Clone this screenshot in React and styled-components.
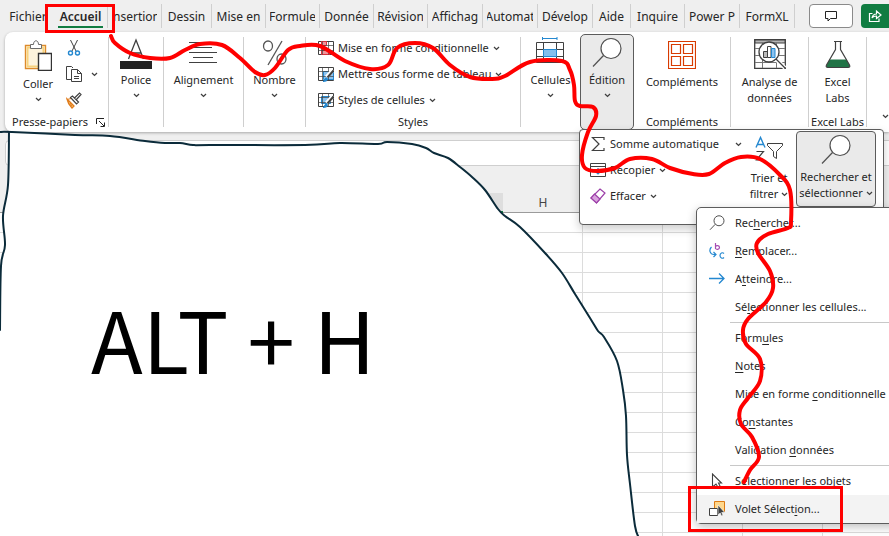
import React from "react"
import styled, { createGlobalStyle, css } from "styled-components"

const color = {
  chrome: "#efefef",
  text: "#262626",
  line: "#cfcfcf",
  outline: "#5c5c5c",
  pressed: "#eaeaea",
  green: "#107c41",
  blue: "#2488d0",
  red: "#ff0000",
  ink: "#0b2b3a",
}

const GlobalStyle = createGlobalStyle`
  * {
    box-sizing: border-box;
  }

  body {
    margin: 0;
    overflow: hidden;
    color: ${color.text};
    background: #fff;
    font-family: "Noto Sans", "Open Sans", sans-serif;
    font-size: 11px;
    line-height: 16px;
  }

  button {
    margin: 0;
    padding: 0;
    border: 0;
    color: inherit;
    background: none;
    font: inherit;
  }

  svg {
    display: block;
    flex: none;
  }
`

const Window = styled.div`
  position: relative;
  display: flex;
  flex-direction: column;
  height: 100vh;
  overflow: hidden;
  background: ${color.chrome};
`

/* Tabs */

const TabBar = styled.header`
  display: flex;
  flex: none;
  align-items: center;
  justify-content: space-between;
  height: 32px;
`

const Tabs = styled.nav`
  display: flex;
`

const Tab = styled.button`
  display: flex;
  width: ${p => p.$width}px;
  height: 24px;
  padding: 0 4px;
  border-right: 1px solid ${color.line};
  font-size: 12px;
  line-height: 26px;

  ${p =>
    p.$first &&
    css`
      padding: 0 6px 0 8px;
      border-right: 0;
    `}

  ${p =>
    p.$active &&
    css`
      font-weight: 600;
    `}
`

const TabText = styled.span`
  display: flex;
  flex: 1;
  justify-content: center;
  height: 24px;
  overflow: hidden;
  white-space: nowrap;
  border-bottom: ${p => (p.$active ? `2px solid ${color.green}` : 0)};
`

const TabActions = styled.div`
  display: flex;
  gap: 8px;
`

const ActionButton = styled.button`
  display: flex;
  align-items: center;
  justify-content: center;
  width: 44px;
  height: 24px;
  border: 1px solid #8a8a8a;
  border-radius: 4px;
  background: #fff;
`

const ShareButton = styled(ActionButton)`
  justify-content: flex-start;
  width: 28px;
  padding-left: 7px;
  border: 0;
  border-radius: 4px 0 0 4px;
  background: ${color.green};
`

/* Ribbon */

const RibbonBar = styled.section`
  display: flex;
  flex: none;
  height: 100px;
  margin-left: 5px;
  padding: 5px 0;
  border-radius: 8px 0 0 8px;
  background: #fff;
  box-shadow: 0 1px 3px rgba(0, 0, 0, 0.3);
`

const Group = styled.div`
  display: flex;
  flex: none;
  flex-direction: column;
  align-items: center;
  justify-content: space-between;
  width: ${p => p.$width}px;
  border-right: ${p => (p.$open ? 0 : `1px solid ${color.line}`)};
`

const GroupLabel = styled.div`
  display: flex;
  align-items: center;
  gap: 8px;
  line-height: 10px;
  white-space: nowrap;
`

const BigButton = styled.button`
  display: flex;
  flex-direction: column;
  align-items: center;
  white-space: nowrap;
  text-align: center;

  > svg:first-child {
    margin-bottom: ${p => (p.$lines ? 5 : 3)}px;
  }
`

const ButtonCaret = styled.span`
  padding-top: 5px;
`

const ClipboardGroup = styled(Group)`
  padding-left: 4px;
`

const ClipboardTools = styled.div`
  display: grid;
  grid-template-columns: 46px 44px;
  align-items: start;
  align-self: flex-start;
  padding-left: 6px;
`

const SmallTools = styled.div`
  display: flex;
  flex-direction: column;
  gap: 8px;
  padding: 2px 0 0 4px;
`

const SmallButton = styled.button`
  display: flex;
  align-items: center;
  gap: 8px;
  height: 18px;
`

const RowList = styled.div`
  display: flex;
  flex-direction: column;
  align-items: flex-start;
  gap: 8px;
  width: ${p => p.$width}px;
`

const RowButton = styled.button`
  display: flex;
  align-items: center;
  gap: 4px;
  width: ${p => (p.$wide ? "100%" : "auto")};
  height: 18px;
  white-space: nowrap;

  > svg:last-child {
    margin-left: ${p => (p.$wide ? "auto" : 0)};
  }
`

const StylesBody = styled.div`
  align-self: flex-start;
  padding: 2px 0 0 12px;
`

const OpenGroup = styled.div`
  position: relative;
  flex: none;
  width: 54px;
  margin: -3px 0;
`

const PressedButton = styled(BigButton)`
  width: 100%;
  height: 96px;
  padding-top: 2px;
  border: 1px solid ${color.outline};
  border-radius: 5px;
  background: ${color.pressed};
`

const RibbonEnd = styled.div`
  display: flex;
  flex: 1;
  align-items: flex-end;
  justify-content: flex-end;
  padding-bottom: 8px;
`

/* Flyout under the pressed ribbon button */

const Flyout = styled.div`
  position: absolute;
  z-index: 2;
  top: 95px;
  left: -1px;
  display: flex;
  width: 305px;
  height: 96px;
  padding: 1px 7px 0 10px;
  border: 1px solid ${color.outline};
  border-radius: 4px;
  background: #fff;
  box-shadow: 0 4px 10px rgba(0, 0, 0, 0.2);
`

const FlyoutRows = styled(RowList)`
  flex: none;
  padding-top: 4px;
`

const FlyoutButton = styled(BigButton)`
  flex: 1;
  height: 76px;
  padding-top: 4px;

  > svg:first-child {
    margin-bottom: 3px;
  }
`

const FlyoutPressed = styled(FlyoutButton)`
  flex: none;
  width: 80px;
  padding-top: 2px;
  border: 1px solid ${color.outline};
  border-radius: 4px;
  background: ${color.pressed};
`

const CaretLine = styled.span`
  display: flex;
  align-items: center;
  justify-content: center;
  gap: 3px;
`

const Menu = styled.div`
  position: absolute;
  z-index: 3;
  top: 77px;
  left: 116px;
  width: 230px;
  padding: 1px 0 0;
  border: 1px solid ${color.outline};
  border-radius: 5px;
  background: #fff;
  box-shadow: 0 3px 10px rgba(0, 0, 0, 0.25);
`

const MenuItem = styled.button`
  display: grid;
  grid-template-columns: 26px 1fr;
  align-items: center;
  width: 100%;
  height: 28px;
  padding-left: 12px;
  background: ${p => (p.$hover ? "#f3f3f3" : "none")};
  text-align: left;
  white-space: nowrap;

  u {
    text-underline-offset: 2px;
  }
`

const MenuRule = styled.hr`
  height: 1px;
  margin: 1px 0 1px 33px;
  border: 0;
  background: #c8c8c8;
`

/* Worksheet */

const FormulaBar = styled.div`
  flex: none;
  height: 26px;
  margin: 8px 0 0 5px;
  border: 1px solid ${color.line};
  border-right: 0;
  border-radius: 5px 0 0 5px;
  background: #fff;
`

const Sheet = styled.table`
  flex: none;
  width: 983px;
  margin-top: 27px;
  border-collapse: separate;
  border-spacing: 0;
  table-layout: fixed;
`

const ColumnHead = styled.th`
  width: ${p => (p.$corner ? 23 : 80)}px;
  height: 20px;
  padding: 0;
  border-bottom: ${p => (p.$selected ? `2px solid ${color.green}` : "1px solid #9b9b9b")};
  color: #444;
  background: ${p => (p.$selected ? "#dedede" : color.chrome)};
  font-size: 12px;
  font-weight: 400;
  line-height: 18px;
`

const Cell = styled.td`
  height: 20px;
  padding: 0;
  border-right: 1px solid #dcdcdc;
  border-bottom: 1px solid #dcdcdc;
  background: #fff;
`

/* Drawing layer */

const Drawing = styled.svg`
  position: absolute;
  z-index: ${p => p.$layer};
  inset: 0;
  width: 100%;
  height: 100%;
  fill: none;
  stroke-linecap: round;
  stroke-linejoin: round;
  pointer-events: none;
`

const Note = styled.p`
  position: absolute;
  z-index: 1;
  top: 275px;
  left: 91px;
  margin: 0;
  color: #000;
  font-family: "Noto Sans CJK JP", "Noto Sans", sans-serif;
  font-size: 85px;
  line-height: 124px;
  white-space: nowrap;
`

/* Icons */

const Icon = ({ w = 18, h = 18, children, ...rest }) => (
  <svg
    width={w}
    height={h}
    viewBox={`0 0 ${w} ${h}`}
    fill="none"
    stroke="#404040"
    aria-hidden="true"
    {...rest}
  >
    {children}
  </svg>
)

const Caret = () => (
  <Icon w={7} h={5} strokeWidth="1.3">
    <path d="M1 1l2.5 2.4L6 1" />
  </Icon>
)

const PasteIcon = () => (
  <Icon w={28} h={34}>
    <path d="M1.5 8.5h20v23h-20z" fill="#fff" stroke="#dd8a2b" strokeWidth="1.4" />
    <path d="M3.5 10.5h16v19h-16z" fill="#fdf3dc" stroke="#f7d27c" strokeWidth="2" />
    <path d="M6.5 11.5v-4h3c0-5 5-5 5 0h3v4z" fill="#fff" stroke="#6b6b6b" />
    <path d="M14.5 16.5h13v17h-13z" fill="#fff" stroke="#333" strokeWidth="1.4" />
  </Icon>
)

const CutIcon = () => (
  <Icon>
    <path d="M5.5 1l5.5 11M12.5 1L7 12" />
    <circle cx="5.5" cy="14" r="2" stroke={color.blue} strokeWidth="1.4" />
    <circle cx="12.5" cy="14" r="2" stroke={color.blue} strokeWidth="1.4" />
  </Icon>
)

const CopyIcon = () => (
  <Icon>
    <path d="M7 14.5H1.5v-13h5L8 3" />
    <path d="M6.5 4.5h6l4 4v8h-10z" fill="#fff" />
    <path d="M12.5 4.5v4h4M9 11.5h5M9 13.5h5" />
  </Icon>
)

const BrushIcon = () => (
  <Icon>
    <path d="M2 8l7 7-2 2c-2-2-4-4-5-9z" fill="#f9d08b" stroke="#e07c1c" strokeWidth="1.3" />
    <path d="M2 8.5l4-1M5 12l2 3" stroke="#e07c1c" />
    <path d="M5.5 6.5l2-1.5 6 6-2 2zM9.5 7l5-5L16 3.5l-4.5 5" fill="#fff" strokeWidth="1.2" />
  </Icon>
)

const LauncherIcon = () => (
  <Icon w={9} h={9} stroke="#222">
    <path d="M.5 6V.5H8M3 3l5 5M8.5 4.5v4h-4" />
  </Icon>
)

const FontIcon = () => (
  <Icon w={32} h={32}>
    <path d="M8.5 22L16 3l7.5 19M11 16h10" strokeWidth="1.3" />
    <path d="M0 24h32v8H0z" fill="#222" stroke="none" />
  </Icon>
)

const AlignIcon = () => (
  <Icon w={32} h={32}>
    <path d="M2 5.5h28M7 10.5h18M2 15.5h28M6 20.5h20M2 25.5h28" />
  </Icon>
)

const PercentIcon = () => (
  <Icon w={28} h={32} stroke="#555" strokeWidth="1.3">
    <ellipse cx="7" cy="9" rx="4.5" ry="5" />
    <ellipse cx="20.5" cy="22" rx="4.5" ry="5" />
    <path d="M21 4L7 28" />
  </Icon>
)

const TableIcon = ({ kind }) => (
  <Icon w={16} h={16}>
    <path d="M.5 1.5h15v13H.5z" fill="#fff" />
    {kind === "conditional" && (
      <path d="M3.5 1.5h5v4h-5zM3.5 5.5h3v5h-3zM3.5 10.5h8v4h-8z" fill="#f0949a" stroke="#d8323c" />
    )}
    {kind !== "conditional" && (
      <path
        d={kind === "cells" ? "M3.5 4.5h9v7h-9z" : "M5.5 5.5h10v8h-10z"}
        fill="#8cc2ee"
        stroke={color.blue}
      />
    )}
    <path d="M.5 5.5h15M.5 10.5h15M4.5 1.5v13M10.5 1.5v13" strokeWidth=".7" />
    {kind !== "conditional" && (
      <>
        <path d="M15 4l-6.5 7" stroke="#fff" strokeWidth="4" />
        <path d="M15.5 4.5l-6 7" strokeWidth="2" />
        <path
          d="M5 15.5c2 0 1-3 3-3.5 2.5 0 2.5 3.5-3 3.5z"
          fill={color.blue}
          stroke={color.blue}
        />
      </>
    )}
  </Icon>
)

const CellsIcon = () => (
  <Icon w={30} h={32}>
    <path d="M7 1.5h15M7.5 0v3M22 0v3" stroke={color.blue} />
    <path d="M1.5 5.5h27v20h-27zM1.5 12.5h27M1.5 19.5h27M8.5 5.5v20M21.5 5.5v20" />
    <path d="M8.5 12.5h13v7h-13z" fill="#83beec" stroke={color.blue} />
  </Icon>
)

const SearchIcon = ({ w = 32, h = 32 }) => (
  <svg
    width={w}
    height={h}
    viewBox="0 0 32 32"
    fill="none"
    stroke="#505050"
    strokeWidth={w > 20 ? 1.2 : 2}
    aria-hidden="true"
  >
    <circle cx="20" cy="11.5" r="10" fill="#fff" />
    <path d="M12.5 18.5L2 29.5" />
  </svg>
)

const AddinsIcon = () => (
  <Icon w={28} h={32} stroke="#d83b01" strokeWidth="1.2">
    <path d="M.5 4.5h27v27H.5zM3.5 7.5h9v9h-9zM15.5 7.5h9v9h-9zM3.5 19.5h9v9h-9zM15.5 19.5h9v9h-9z" />
  </Icon>
)

const AnalysisIcon = () => (
  <Icon w={32} h={32}>
    <path d="M.7 2.7h30.6v28.6H.7z" fill="#fff" strokeWidth="1.3" />
    <path d="M1 3h30v3H1z" fill="#b5b5b5" />
    <path d="M1 11.5h30M1 18.5h30M1 25.5h30M8.5 5v26M22.5 5v26" stroke="#777" />
    <circle cx="15" cy="15" r="10" fill="#fff" strokeWidth="1.3" />
    <path d="M9.5 14.5h4v6h-4z" fill="#bbb" />
    <path d="M13.5 9.5H17v11h-3.5z" fill="#fff" />
    <path d="M17.5 11.5H21v9h-3.5z" fill="#8cc2ee" stroke={color.blue} />
    <path d="M22.5 22.5l8.5 8.5" stroke="#fff" strokeWidth="4" />
    <path d="M22 22l9.5 9.5" strokeWidth="1.3" />
  </Icon>
)

const FlaskIcon = () => (
  <Icon w={28} h={32}>
    <path d="M5.5 22.5h17l3 6c.4 1.5-.5 2-1.5 2H4c-1 0-2-.5-1.5-2z" fill="#217346" stroke="none" />
    <path
      d="M10 4.5h8M11.5 4.5v8L2.5 28c-.8 1.8 0 2.5 1.5 2.5h20c1.5 0 2.3-.7 1.5-2.5l-9-15.500v-8"
      strokeWidth="1.2"
    />
  </Icon>
)

const CommentIcon = () => (
  <Icon w={12} h={12} stroke="#222">
    <path d="M.5 1.5h11v7h-6L3 11V8.5H.5z" />
  </Icon>
)

const ShareIcon = () => (
  <Icon w={14} h={14} stroke="#fff" strokeWidth="1.2">
    <path d="M4.5 4.5h-3v8H11v-3" />
    <path d="M4 9c.5-3 2-4 4.5-4V2L13 6 8.5 9.5V7C6.500 7 5 7.500 4 9z" />
  </Icon>
)

const SumIcon = () => (
  <Icon w={16} h={16} strokeWidth="1.2">
    <path d="M14 4V1.5H2.5L9 8l-6.5 6.5H14V12" />
  </Icon>
)

const FillIcon = () => (
  <Icon w={16} h={16}>
    <path d="M.5 1.5h15v13H.5zM.5 4.5h15" />
    <path d="M8 6v6M5.5 9.5L8 12l2.5-2.5" stroke={color.blue} strokeWidth="1.2" />
  </Icon>
)

const EraserIcon = () => (
  <Icon w={16} h={16} stroke="#9c3fa8" strokeWidth="1.2">
    <path d="M10 1l5 4-8.500 10L1 10z" fill="#fff" />
    <path d="M4.500 6L10 11l-3.500 4L1 10z" fill="#d9a2de" />
  </Icon>
)

const SortFilterIcon = () => (
  <Icon w={30} h={32}>
    <path d="M2 12.5L6.5 2.5l4.5 10M3.5 9.5h6" stroke={color.blue} strokeWidth="1.4" />
    <path d="M2.5 16.5h7L2.5 25H10" strokeWidth="1.2" />
    <path d="M13.5 8.5h15v2l-6 6v7l-3-2v-5l-6-6z" />
  </Icon>
)

const ReplaceIcon = () => (
  <Icon w={16} h={16} strokeWidth="1.2">
    <path d="M6.5 0v6M6.5 3.5c1-1.5 4-1 4 1s-3 2.5-4 1" stroke="#a64db2" />
    <path
      d="M2.5 4C-.5 7 1 11.5 5 11.5h2M4.5 9L7 11.5 4.5 14M15 10.5c-1.5-1.5-4-.5-4 2s2.500 3.500 4 2"
      stroke={color.blue}
    />
  </Icon>
)

const ArrowIcon = () => (
  <Icon w={16} h={16} stroke={color.blue} strokeWidth="1.3">
    <path d="M0 7.5h15M10 2.5l5 5-5 5" />
  </Icon>
)

const PointerIcon = () => (
  <Icon w={16} h={16}>
    <path d="M3.5 1v13L7 11l2.5 4 2-1-2-4h3z" fill="#fff" strokeWidth="1.1" />
  </Icon>
)

const PaneIcon = () => (
  <Icon w={16} h={18}>
    <path d="M5.5 1.5h10v10h-10z" fill="#ffd78c" stroke="#dd7a14" />
    <path d="M.5 8.5h8v7h-8z" fill="#fff" />
    <path d="M9 5v10l2.2-2 1.3 3 1.5-.8-1.3-2.7h3z" fill="#404040" stroke="#fff" strokeWidth=".6" />
  </Icon>
)

/* Content */

const tabs = [
  { label: "Fichier", width: 54, first: true },
  { label: "Accueil", width: 54, active: true },
  { label: "Insertion", width: 54 },
  { label: "Dessin", width: 50 },
  { label: "Mise en", width: 54 },
  { label: "Formule", width: 54 },
  { label: "Donnée", width: 54 },
  { label: "Révision", width: 54 },
  { label: "Affichag", width: 55 },
  { label: "Automat", width: 55 },
  { label: "Dévelop", width: 55 },
  { label: "Aide", width: 38 },
  { label: "Inquire", width: 54 },
  { label: "Power P", width: 55 },
  { label: "FormXL", width: 55 },
]

const menu = [
  { icon: <SearchIcon w={16} h={16} />, text: <>Rec<u>h</u>ercher...</> },
  { icon: <ReplaceIcon />, text: <><u>R</u>emplacer...</> },
  { icon: <ArrowIcon />, text: <>A<u>t</u>teindre...</> },
  { text: <>Sé<u>l</u>ectionner les cellules...</> },
  { rule: true },
  { text: <>Form<u>u</u>les</> },
  { text: <><u>N</u>otes</> },
  { text: <>Mise en forme <u>c</u>onditionnelle</> },
  { text: <>Co<u>n</u>stantes</> },
  { text: <>Validation <u>d</u>onnées</> },
  { rule: true },
  { icon: <PointerIcon />, text: <>Sélectionner les o<u>b</u>jets</> },
  { icon: <PaneIcon />, text: <>Volet Sélect<u>i</u>on...</>, hover: true },
]

const columns = ["", "", "", "", "", "", "H", "", "", "", "", ""]
const selectedColumn = 5
const rows = Array.from({ length: 17 }, (_, i) => i)

const trail = [
  [111, 36], [115, 43], [130, 53], [150, 58], [170, 58], [185, 50], [200, 44],
  [222, 45], [240, 58], [255, 72], [265, 75], [275, 68], [288, 50], [300, 46],
  [320, 46], [345, 61], [370, 69], [388, 65], [397, 48], [415, 43], [433, 48],
  [450, 65], [470, 77], [492, 79], [505, 76], [530, 62], [562, 61], [570, 70],
  [574, 85], [575, 101], [580, 106], [593, 107], [596, 116], [588, 132],
  [582, 155], [585, 168], [597, 171], [615, 168], [630, 159], [652, 159],
  [670, 168], [693, 174], [709, 174], [725, 163], [741, 157], [760, 159],
  [780, 175], [790, 190], [791, 222], [788, 228], [768, 234], [757, 243],
  [758, 253], [770, 271], [773, 288], [766, 302], [748, 319], [743, 330],
  [746, 344], [760, 359], [760, 381], [748, 398], [740, 410], [741, 424],
  [752, 437], [759, 457], [750, 470], [744, 482],
]

const topEdge = [
  [0, 132], [12, 132], [75, 135], [110, 136], [145, 141], [165, 143],
  [180, 143], [193, 145], [210, 145], [305, 145], [340, 143], [378, 144],
  [387, 142], [412, 144], [426, 148], [434, 153], [448, 158], [460, 167],
  [472, 177], [485, 190], [498, 209], [505, 216], [520, 227], [545, 253],
  [562, 273], [575, 294], [590, 318], [598, 331], [604, 337], [617, 361],
  [623, 390], [626, 416], [627, 455], [630, 484], [635, 526], [639, 538],
]

const leftEdge = [
  [9, 132], [8, 185], [3, 216], [5, 245], [1, 266], [0, 330],
]

// Catmull-Rom through the points, written out as cubic segments
const smooth = pts =>
  pts.slice(1).reduce((d, p, i) => {
    const a = pts[i]
    const before = pts[i - 1] || a
    const after = pts[i + 2] || p
    const c1 = [a[0] + (p[0] - before[0]) / 6, a[1] + (p[1] - before[1]) / 6]
    const c2 = [p[0] - (after[0] - a[0]) / 6, p[1] - (after[1] - a[1]) / 6]
    return `${d}C${c1} ${c2} ${p}`
  }, `M${pts[0]}`)

const blob = `${smooth(topEdge)}L0 538L${[...leftEdge].reverse().join("L")}Z`

const Header = () => (
  <TabBar>
    <Tabs>
      {tabs.map(t => (
        <Tab
          key={t.label}
          type="button"
          $width={t.width}
          $first={t.first}
          $active={t.active}
        >
          <TabText $active={t.active}>{t.label}</TabText>
        </Tab>
      ))}
    </Tabs>
    <TabActions>
      <ActionButton type="button" aria-label="Commentaires">
        <CommentIcon />
      </ActionButton>
      <ShareButton type="button" aria-label="Partager">
        <ShareIcon />
      </ShareButton>
    </TabActions>
  </TabBar>
)

const CaretButton = ({ icon, label }) => (
  <BigButton type="button">
    {icon}
    {label}
    <ButtonCaret>
      <Caret />
    </ButtonCaret>
  </BigButton>
)

const FindMenu = () => (
  <Menu>
    {menu.map((item, i) =>
      item.rule ? (
        <MenuRule key={i} />
      ) : (
        <MenuItem key={i} type="button" $hover={item.hover}>
          <span>{item.icon}</span>
          <span>{item.text}</span>
        </MenuItem>
      )
    )}
  </Menu>
)

const EditFlyout = () => (
  <Flyout>
    <FlyoutRows $width={152}>
      <RowButton type="button" $wide>
        <SumIcon />
        Somme automatique
        <Caret />
      </RowButton>
      <RowButton type="button">
        <FillIcon />
        Recopier
        <Caret />
      </RowButton>
      <RowButton type="button">
        <EraserIcon />
        Effacer
        <Caret />
      </RowButton>
    </FlyoutRows>
    <FlyoutButton type="button">
      <SortFilterIcon />
      Trier et
      <CaretLine>
        filtrer <Caret />
      </CaretLine>
    </FlyoutButton>
    <FlyoutPressed type="button">
      <SearchIcon />
      Rechercher et
      <CaretLine>
        sélectionner <Caret />
      </CaretLine>
    </FlyoutPressed>
    <FindMenu />
  </Flyout>
)

const Ribbon = () => (
  <RibbonBar>
    <ClipboardGroup $width={104}>
      <ClipboardTools>
        <BigButton type="button" $lines>
          <PasteIcon />
          Coller
          <ButtonCaret>
            <Caret />
          </ButtonCaret>
        </BigButton>
        <SmallTools>
          <SmallButton type="button" aria-label="Couper">
            <CutIcon />
          </SmallButton>
          <SmallButton type="button" aria-label="Copier">
            <CopyIcon />
            <Caret />
          </SmallButton>
          <SmallButton type="button" aria-label="Reproduire la mise en forme">
            <BrushIcon />
          </SmallButton>
        </SmallTools>
      </ClipboardTools>
      <GroupLabel>
        Presse-papiers <LauncherIcon />
      </GroupLabel>
    </ClipboardGroup>
    <Group $width={55}>
      <CaretButton icon={<FontIcon />} label="Police" />
    </Group>
    <Group $width={80}>
      <CaretButton icon={<AlignIcon />} label="Alignement" />
    </Group>
    <Group $width={62}>
      <CaretButton icon={<PercentIcon />} label="Nombre" />
    </Group>
    <Group $width={215}>
      <StylesBody>
        <RowList>
          <RowButton type="button">
            <TableIcon kind="conditional" />
            Mise en forme conditionnelle
            <Caret />
          </RowButton>
          <RowButton type="button">
            <TableIcon kind="table" />
            Mettre sous forme de tableau
            <Caret />
          </RowButton>
          <RowButton type="button">
            <TableIcon kind="cells" />
            Styles de cellules
            <Caret />
          </RowButton>
        </RowList>
      </StylesBody>
      <GroupLabel>Styles</GroupLabel>
    </Group>
    <Group $width={59} $open>
      <CaretButton icon={<CellsIcon />} label="Cellules" />
    </Group>
    <OpenGroup>
      <PressedButton type="button">
        <SearchIcon />
        Édition
        <ButtonCaret>
          <Caret />
        </ButtonCaret>
      </PressedButton>
      <EditFlyout />
    </OpenGroup>
    <Group $width={97}>
      <BigButton type="button" $lines>
        <AddinsIcon />
        Compléments
      </BigButton>
      <GroupLabel>Compléments</GroupLabel>
    </Group>
    <Group $width={78}>
      <BigButton type="button" $lines>
        <AnalysisIcon />
        Analyse de
        <br />
        données
      </BigButton>
    </Group>
    <Group $width={58}>
      <BigButton type="button" $lines>
        <FlaskIcon />
        Excel
        <br />
        Labs
      </BigButton>
      <GroupLabel>Excel Labs</GroupLabel>
    </Group>
    <RibbonEnd>
      <Caret />
    </RibbonEnd>
  </RibbonBar>
)

const Worksheet = () => (
  <Sheet>
    <thead>
      <tr>
        <ColumnHead $corner />
        {columns.map((name, i) => (
          <ColumnHead key={i} $selected={i === selectedColumn}>
            {name}
          </ColumnHead>
        ))}
      </tr>
    </thead>
    <tbody>
      {rows.map(row => (
        <tr key={row}>
          <Cell />
          {columns.map((_, i) => (
            <Cell key={i} />
          ))}
        </tr>
      ))}
    </tbody>
  </Sheet>
)

const App = () => (
  <>
    <GlobalStyle />
    <Window>
      <Header />
      <Ribbon />
      <FormulaBar />
      <Worksheet />
      <Drawing $layer={1} stroke={color.ink} strokeWidth="2">
        <path d={blob} fill="#fff" stroke="none" />
        <path d={smooth(topEdge)} />
        <path d={smooth(leftEdge)} />
      </Drawing>
      <Note>ALT + H</Note>
      <Drawing $layer={4} stroke={color.red} strokeWidth="4">
        <path d={smooth(trail)} />
        <g strokeWidth="3" strokeLinejoin="miter">
          <rect x="46.5" y="5.5" width="67" height="26" />
          <rect x="689.5" y="487.5" width="152" height="43" />
        </g>
      </Drawing>
    </Window>
  </>
)

export default App
